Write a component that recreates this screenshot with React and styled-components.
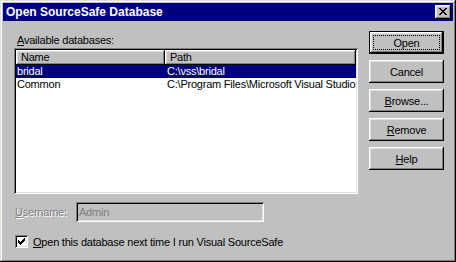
import React from "react";
import styled, { createGlobalStyle, css } from "styled-components";

const GlobalStyle = createGlobalStyle`
  html, body {
    margin: 0;
    padding: 0;
    background: #c0c0c0;
  }
  * {
    box-sizing: border-box;
  }
`;

const raised = css`
  box-shadow: inset -1px -1px #000, inset 1px 1px #fff, inset -2px -2px #808080,
    inset 2px 2px #dfdfdf;
`;

const sunken = css`
  box-shadow: inset 1px 1px #808080, inset -1px -1px #fff, inset 2px 2px #000,
    inset -2px -2px #dfdfdf;
`;

const Window = styled.div`
  width: 456px;
  height: 262px;
  padding: 3px;
  background: #c0c0c0;
  box-shadow: inset -1px -1px #000, inset 1px 1px #dfdfdf, inset -2px -2px #808080,
    inset 2px 2px #fff;
  font-family: "Liberation Sans", Arial, sans-serif;
  font-size: 11px;
  letter-spacing: -0.22px;
  color: #000;
  display: flex;
  flex-direction: column;
`;

const TitleBar = styled.div`
  height: 18px;
  background: #000080;
  display: flex;
  align-items: center;
  justify-content: space-between;
  padding: 0 2px 0 3px;
`;

const Title = styled.span`
  color: #fff;
  font-weight: 700;
  font-size: 12px;
  letter-spacing: 0;
`;

const CloseButton = styled.div`
  width: 16px;
  height: 14px;
  background: #c0c0c0;
  ${raised};
  display: flex;
  align-items: center;
  justify-content: center;
  padding-bottom: 1px;
`;

const Body = styled.div`
  display: flex;
  gap: 11px;
  padding: 10px 9px 0 11px;
`;

const LeftColumn = styled.div`
  width: 344px;
  display: flex;
  flex-direction: column;
  padding-top: 3px;
`;

const Label = styled.div`
  line-height: 13px;
  height: 13px;
  margin: 0 0 1px 3px;
`;

const ListBox = styled.div`
  height: 146px;
  padding: 2px;
  background: #fff;
  ${sunken};
`;

const Columns = styled.div`
  display: grid;
  grid-template-columns: 149px 191px;
`;

const HeaderCell = styled.div`
  height: 15px;
  line-height: 14px;
  padding-left: 5px;
  background: #c0c0c0;
  ${raised};
`;

const Row = styled(Columns)`
  height: 13px;
  line-height: 13px;
  width: 340px;
  background: ${(p) => (p.$selected ? "#000080" : "transparent")};
  color: ${(p) => (p.$selected ? "#fff" : "#000")};
  white-space: nowrap;
`;

const Cell = styled.div`
  padding-left: ${(p) => p.$pad}px;
  overflow: hidden;
`;

const FieldRow = styled.div`
  display: flex;
  align-items: center;
  margin-top: 8px;
  height: 20px;
`;

const DisabledLabel = styled.div`
  width: 62px;
  padding-left: 1px;
  color: #808080;
  text-shadow: 1px 1px #fff;
`;

const TextBox = styled.div`
  width: 188px;
  height: 20px;
  line-height: 20px;
  padding-left: 3px;
  background: #c0c0c0;
  color: #808080;
  ${sunken};
`;

const CheckRow = styled.div`
  display: flex;
  align-items: center;
  gap: 5px;
  margin-top: 13px;
  padding-left: 1px;
  height: 13px;
`;

const CheckBox = styled.div`
  width: 13px;
  height: 13px;
  background: #fff;
  ${sunken};
  display: flex;
  align-items: center;
  justify-content: center;
`;

const ButtonColumn = styled.div`
  display: flex;
  flex-direction: column;
  gap: 6px;
`;

const Button = styled.button`
  position: relative;
  width: 75px;
  height: 23px;
  padding: 0;
  border: none;
  background: #c0c0c0;
  font-family: inherit;
  font-size: 11px;
  letter-spacing: inherit;
  color: #000;
  ${raised};
  ${(p) =>
    p.$default &&
    css`
      box-shadow: inset 0 0 0 1px #000, inset -2px -2px #000, inset 2px 2px #fff,
        inset -3px -3px #808080, inset 3px 3px #dfdfdf;
      &::after {
        content: "";
        position: absolute;
        inset: 4px 4px 4px 4px;
        border: 1px dotted #000;
      }
    `}
`;

function CloseGlyph() {
  const px = [
    [0, 0, 2], [6, 0, 2],
    [1, 1, 2], [5, 1, 2],
    [2, 2, 4],
    [3, 3, 2],
    [2, 4, 4],
    [1, 5, 2], [5, 5, 2],
    [0, 6, 2], [6, 6, 2],
  ];
  return (
    <svg width="8" height="7" viewBox="0 0 8 7" shapeRendering="crispEdges">
      {px.map(([x, y, w], i) => (
        <rect key={i} x={x} y={y} width={w} height={1} fill="#000" />
      ))}
    </svg>
  );
}

function CheckGlyph() {
  const rows = [
    "......#",
    ".....##",
    "#...###",
    "##.###.",
    "#####..",
    ".###...",
    "..#....",
  ];
  const rects = [];
  rows.forEach((r, y) =>
    r.split("").forEach((c, x) => {
      if (c === "#") rects.push(<rect key={`${x}-${y}`} x={x} y={y} width={1} height={1} fill="#000" />);
    })
  );
  return (
    <svg width="7" height="7" viewBox="0 0 7 7" shapeRendering="crispEdges">
      {rects}
    </svg>
  );
}

const databases = [
  { name: "bridal", path: "C:\\vss\\bridal", selected: true },
  { name: "Common", path: "C:\\Program Files\\Microsoft Visual Studio" },
];

export default function App() {
  return (
    <>
      <GlobalStyle />
      <Window>
        <TitleBar>
          <Title>Open SourceSafe Database</Title>
          <CloseButton>
            <CloseGlyph />
          </CloseButton>
        </TitleBar>
        <Body>
          <LeftColumn>
            <Label>
              <u>A</u>vailable databases:
            </Label>
            <ListBox>
              <Columns>
                <HeaderCell>Name</HeaderCell>
                <HeaderCell>Path</HeaderCell>
              </Columns>
              {databases.map((db) => (
                <Row key={db.name} $selected={db.selected}>
                  <Cell $pad={1}>{db.name}</Cell>
                  <Cell $pad={2}>{db.path}</Cell>
                </Row>
              ))}
            </ListBox>
            <FieldRow>
              <DisabledLabel>
                <u>U</u>sername:
              </DisabledLabel>
              <TextBox>Admin</TextBox>
            </FieldRow>
            <CheckRow>
              <CheckBox>
                <CheckGlyph />
              </CheckBox>
              <span>
                <u>O</u>pen this database next time I run Visual SourceSafe
              </span>
            </CheckRow>
          </LeftColumn>
          <ButtonColumn>
            <Button $default>Open</Button>
            <Button>Cancel</Button>
            <Button>
              <u>B</u>rowse...
            </Button>
            <Button>
              <u>R</u>emove
            </Button>
            <Button>
              <u>H</u>elp
            </Button>
          </ButtonColumn>
        </Body>
      </Window>
    </>
  );
}
